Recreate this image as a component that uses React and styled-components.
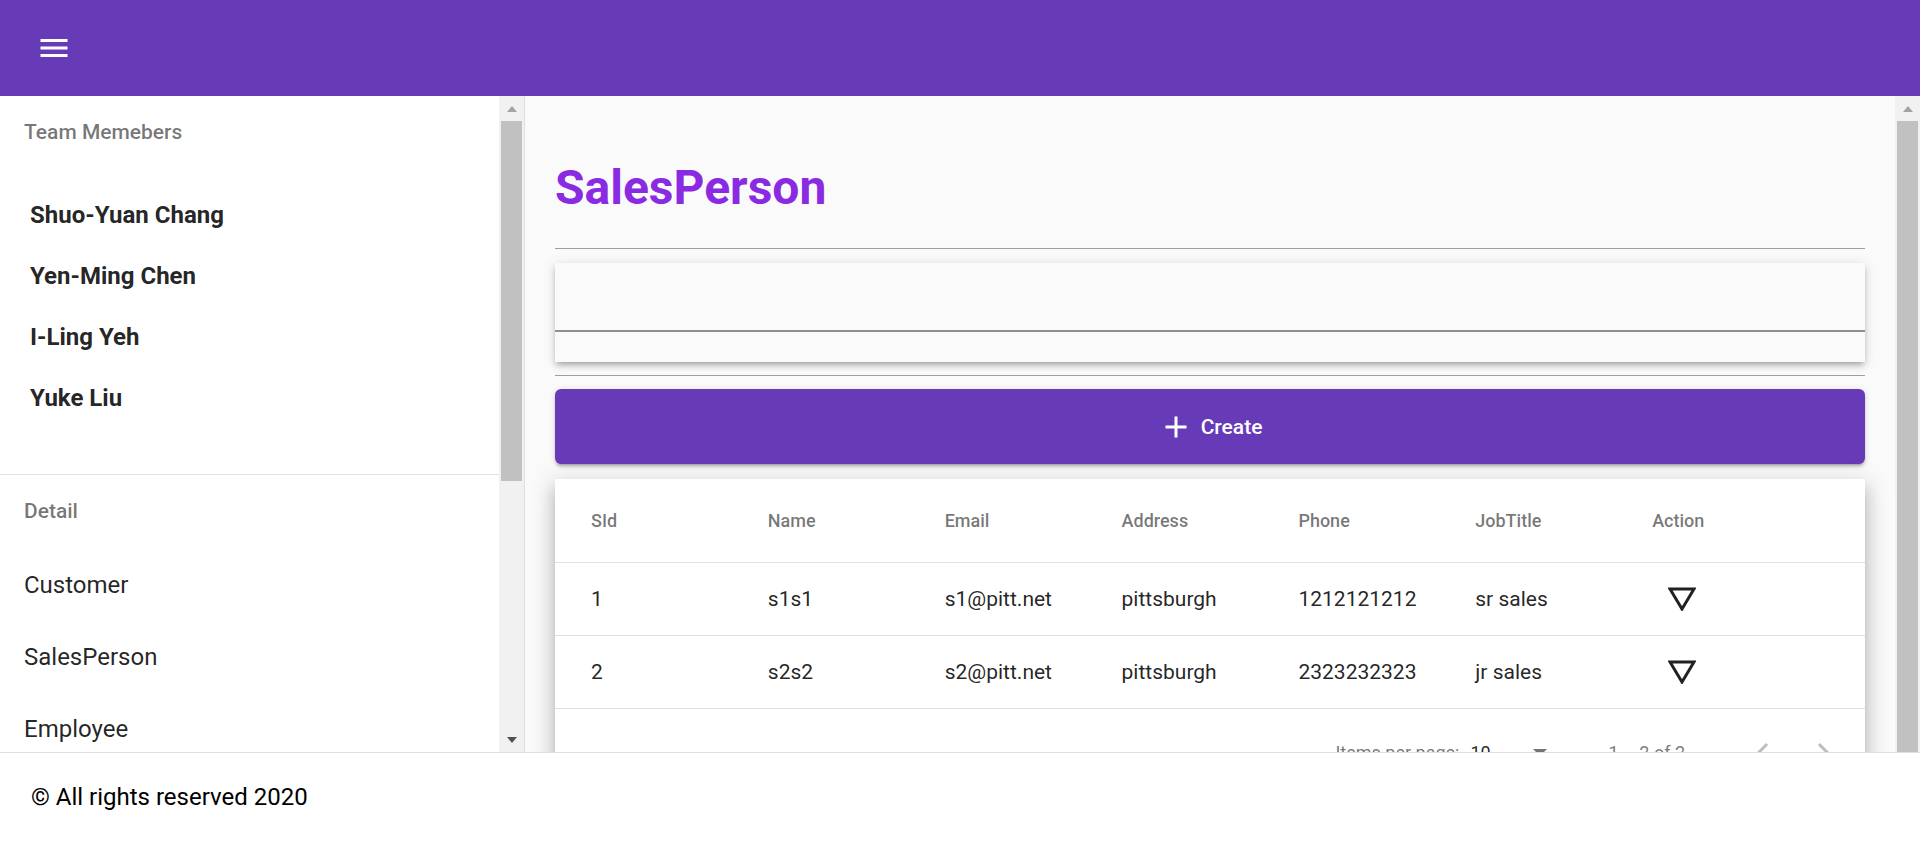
import React from "react";
import styled, { createGlobalStyle } from "styled-components";
import { MdMenu, MdAdd, MdChevronLeft, MdChevronRight } from "react-icons/md";

const GlobalStyle = createGlobalStyle`
  html, body {
    margin: 0;
    height: 100%;
  }
  body {
    font-family: Roboto, "Noto Sans", "Liberation Sans", sans-serif;
    background: #fff;
    overflow: hidden;
  }
  * {
    box-sizing: border-box;
  }
`;

const Page = styled.div`
  display: flex;
  flex-direction: column;
  height: 100vh;
`;

const TopBar = styled.header`
  flex: 0 0 96px;
  display: flex;
  align-items: center;
  padding-left: 36px;
  background: #673ab7;
  color: #fff;
`;

const MenuButton = styled.button`
  display: flex;
  padding: 0;
  border: none;
  background: transparent;
  color: inherit;
  font-size: 36px;
`;

const Body = styled.div`
  flex: 1;
  display: flex;
  min-height: 0;
`;

/* classic scrollbar rail, drawn as a widget */
const Rail = styled.div`
  flex: 0 0 25px;
  display: flex;
  flex-direction: column;
  background: #f1f1f1;
`;

const RailButton = styled.div`
  flex: 0 0 25px;
  display: flex;
  align-items: center;
  justify-content: center;
`;

const Arrow = styled.span`
  width: 0;
  height: 0;
  border-left: 5.5px solid transparent;
  border-right: 5.5px solid transparent;
  ${(p) =>
    p.$down
      ? `border-top: 6px solid ${p.$color};`
      : `border-bottom: 6px solid ${p.$color};`}
`;

const Thumb = styled.div`
  flex: 0 0 ${(p) => p.$size}px;
  margin: 0 2px;
  background: #c1c1c1;
`;

const RailTrack = styled.div`
  flex: 1;
`;

const ScrollRail = ({ thumb }) => (
  <Rail>
    <RailButton>
      <Arrow $color="#a3a3a3" />
    </RailButton>
    <Thumb $size={thumb} />
    <RailTrack />
    <RailButton>
      <Arrow $down $color="#505050" />
    </RailButton>
  </Rail>
);

const Sidebar = styled.nav`
  flex: 0 0 525px;
  height: 656px;
  display: flex;
  background: #fff;
  border-right: 1px solid #e0e0e0;
`;

const SideContent = styled.div`
  flex: 1;
  overflow: hidden;
`;

const Subheader = styled.div`
  height: 72px;
  display: flex;
  align-items: center;
  padding: 0 24px;
  font-size: 21px;
  font-weight: 500;
  color: rgba(0, 0, 0, 0.54);
`;

const MemberList = styled.div`
  padding: 16px 0 46px;
`;

const MemberName = styled.div`
  height: 61px;
  display: flex;
  align-items: center;
  padding-left: 30px;
  font-size: 24px;
  font-weight: 700;
  color: rgba(0, 0, 0, 0.87);
`;

const Divider = styled.div`
  height: 1px;
  background: #e0e0e0;
`;

const NavList = styled.div`
  padding-top: 2px;
`;

const NavItem = styled.a`
  height: 72px;
  display: flex;
  align-items: center;
  padding: 0 24px;
  font-size: 24px;
  color: rgba(0, 0, 0, 0.87);
  text-decoration: none;
`;

const Main = styled.main`
  flex: 1;
  display: flex;
  min-width: 0;
  background: #fafafa;
`;

const MainScroll = styled.div`
  flex: 1;
  overflow: hidden;
`;

const Content = styled.div`
  display: flex;
  flex-direction: column;
  padding: 30px 30px 100px;
`;

const Title = styled.h1`
  margin: 33px 0 32px;
  font-size: 48px;
  font-weight: 700;
  color: #8a2be2;
`;

const Rule = styled.div`
  height: 1px;
  background: #9e9e9e;
  margin-bottom: ${(p) => p.$after}px;
`;

const SearchCard = styled.div`
  height: 99px;
  margin-bottom: 13px;
  background: #fafafa;
  box-shadow: 0 4px 5px -3px rgba(0, 0, 0, 0.2), 0 4px 6px rgba(0, 0, 0, 0.14),
    0 2px 12px rgba(0, 0, 0, 0.12);
`;

const SearchField = styled.div`
  height: 69px;
  border-bottom: 2px solid #8f8f8f;
`;

const CreateButton = styled.button`
  height: 75px;
  margin-bottom: 15px;
  display: flex;
  align-items: center;
  justify-content: center;
  gap: 7px;
  border: none;
  border-radius: 6px;
  background: #673ab7;
  color: #fff;
  font-family: inherit;
  font-size: 21px;
  font-weight: 500;
  box-shadow: 0 4px 2px -3px rgba(0, 0, 0, 0.2), 0 3px 3px rgba(0, 0, 0, 0.14),
    0 1px 7px rgba(0, 0, 0, 0.12);
  svg {
    font-size: 36px;
  }
`;

const TableCard = styled.div`
  background: #fff;
  box-shadow: 0 7px 8px -5px rgba(0, 0, 0, 0.2), 0 12px 15px 2px rgba(0, 0, 0, 0.14),
    0 5px 22px 4px rgba(0, 0, 0, 0.12);
`;

const Row = styled.div`
  display: grid;
  grid-template-columns: repeat(7, 1fr);
  align-items: center;
  padding: 0 36px;
  height: ${(p) => (p.$head ? 84 : 73)}px;
  border-bottom: 1px solid #e0e0e0;
  font-size: ${(p) => (p.$head ? 18 : 21)}px;
  font-weight: ${(p) => (p.$head ? 500 : 400)};
  color: ${(p) => (p.$head ? "rgba(0, 0, 0, 0.54)" : "rgba(0, 0, 0, 0.87)")};
`;

const ActionButton = styled.button`
  width: 60px;
  height: 60px;
  display: flex;
  align-items: center;
  justify-content: center;
  padding: 0;
  border: none;
  background: transparent;
`;

const Paginator = styled.div`
  height: 84px;
  display: flex;
  align-items: center;
  justify-content: flex-end;
  padding: 2px 12px 0;
  font-size: 18px;
  color: rgba(0, 0, 0, 0.54);
`;

const ItemsLabel = styled.span`
  margin-right: 11px;
`;

const SelectBox = styled.div`
  width: 84px;
  display: flex;
  align-items: center;
  justify-content: space-between;
  padding-right: 7px;
  color: rgba(0, 0, 0, 0.87);
`;

const SelectArrow = styled.span`
  width: 0;
  height: 0;
  border-left: 7.5px solid transparent;
  border-right: 7.5px solid transparent;
  border-top: 7.5px solid rgba(0, 0, 0, 0.54);
`;

const RangeLabel = styled.span`
  margin: 0 48px 0 54px;
`;

const PageButton = styled.button`
  width: 60px;
  height: 60px;
  display: flex;
  align-items: center;
  justify-content: center;
  padding: 0;
  border: none;
  background: transparent;
  color: rgba(0, 0, 0, 0.26);
  font-size: 36px;
`;

const Footer = styled.footer`
  position: fixed;
  left: 0;
  right: 0;
  bottom: 0;
  z-index: 2;
  height: 89px;
  display: flex;
  align-items: center;
  padding-left: 31px;
  background: #fff;
  border-top: 1px solid #e0e0e0;
  font-size: 24px;
  color: #000;
`;

const TriangleIcon = () => (
  <svg width="28" height="24" viewBox="0 0 28 24">
    <polygon
      points="2,2 26,2 14,22"
      fill="none"
      stroke="#212121"
      strokeWidth="3"
      strokeLinejoin="miter"
    />
  </svg>
);

const members = ["Shuo-Yuan Chang", "Yen-Ming Chen", "I-Ling Yeh", "Yuke Liu"];
const details = ["Customer", "SalesPerson", "Employee"];
const columns = ["SId", "Name", "Email", "Address", "Phone", "JobTitle", "Action"];
const salesPeople = [
  { id: 1, name: "s1s1", email: "s1@pitt.net", address: "pittsburgh", phone: "1212121212", job: "sr sales" },
  { id: 2, name: "s2s2", email: "s2@pitt.net", address: "pittsburgh", phone: "2323232323", job: "jr sales" },
];

export default function App() {
  return (
    <Page>
      <GlobalStyle />
      <TopBar>
        <MenuButton>
          <MdMenu />
        </MenuButton>
      </TopBar>
      <Body>
        <Sidebar>
          <SideContent>
            <Subheader>Team Memebers</Subheader>
            <MemberList>
              {members.map((m) => (
                <MemberName key={m}>{m}</MemberName>
              ))}
            </MemberList>
            <Divider />
            <Subheader>Detail</Subheader>
            <NavList>
              {details.map((d) => (
                <NavItem key={d}>{d}</NavItem>
              ))}
            </NavList>
          </SideContent>
          <ScrollRail thumb={360} />
        </Sidebar>
        <Main>
          <MainScroll>
            <Content>
              <Title>SalesPerson</Title>
              <Rule $after={14} />
              <SearchCard>
                <SearchField />
              </SearchCard>
              <Rule $after={13} />
              <CreateButton>
                <MdAdd />
                Create
              </CreateButton>
              <TableCard>
                <Row $head>
                  {columns.map((c) => (
                    <div key={c}>{c}</div>
                  ))}
                </Row>
                {salesPeople.map((s) => (
                  <Row key={s.id}>
                    <div>{s.id}</div>
                    <div>{s.name}</div>
                    <div>{s.email}</div>
                    <div>{s.address}</div>
                    <div>{s.phone}</div>
                    <div>{s.job}</div>
                    <div>
                      <ActionButton>
                        <TriangleIcon />
                      </ActionButton>
                    </div>
                  </Row>
                ))}
                <Paginator>
                  <ItemsLabel>Items per page:</ItemsLabel>
                  <SelectBox>
                    <span>10</span>
                    <SelectArrow />
                  </SelectBox>
                  <RangeLabel>1 – 2 of 2</RangeLabel>
                  <PageButton>
                    <MdChevronLeft />
                  </PageButton>
                  <PageButton>
                    <MdChevronRight />
                  </PageButton>
                </Paginator>
              </TableCard>
            </Content>
          </MainScroll>
          <ScrollRail thumb={660} />
        </Main>
      </Body>
      <Footer>© All rights reserved 2020</Footer>
    </Page>
  );
}
